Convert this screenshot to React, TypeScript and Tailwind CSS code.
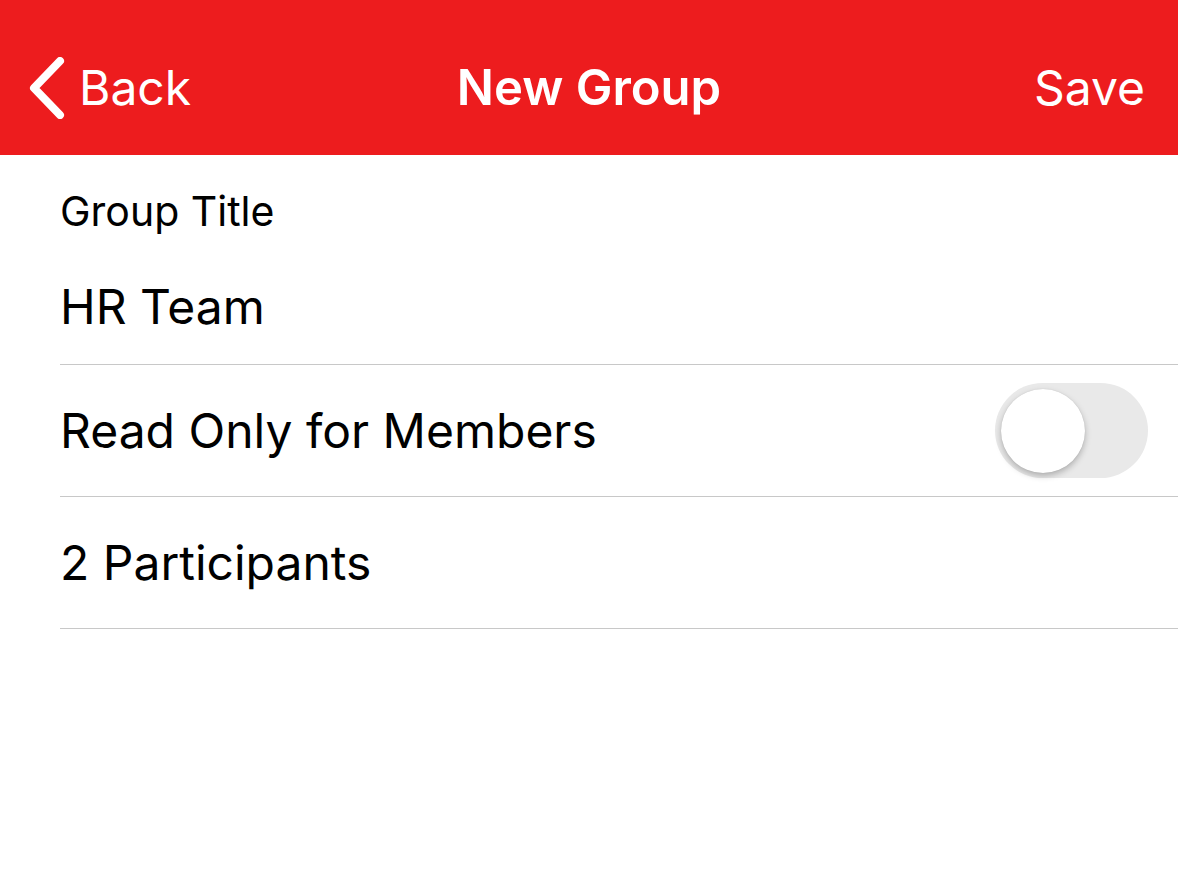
const App = () => {
  return (
    <div className="w-[1178px] h-[870px] bg-white" style={{ fontFamily: "Inter, 'Noto Sans', sans-serif" }}>
      {/* Nav bar */}
      <div className="h-[155px] pt-[20px] bg-[#ed1c1e] flex items-center justify-between text-white relative">
        <div className="flex items-center pl-[29px]">
          <svg width="36" height="62" viewBox="0 0 36 62" fill="none">
            <path d="M31 4 L5 31 L31 58" stroke="white" strokeWidth="8" strokeLinecap="round" strokeLinejoin="round" />
          </svg>
          <span className="ml-[14px] text-[48px] leading-none">Back</span>
        </div>
        <span className="absolute left-1/2 top-[20px] bottom-0 flex items-center -translate-x-1/2 text-[49px] font-semibold leading-none">
          New Group
        </span>
        <span className="pr-[33px] text-[48px] leading-none">Save</span>
      </div>

      <div className="pl-[60px]">
        {/* Group title */}
        <div className="h-[210px] border-b border-[#c8c8c8] flex flex-col">
          <span className="mt-[36px] text-[41px] leading-none text-black">Group Title</span>
          <span className="mt-[51px] text-[48px] leading-none text-black">HR Team</span>
        </div>

        {/* Read only toggle */}
        <div className="h-[132px] border-b border-[#c8c8c8] flex items-center justify-between pr-[30px]">
          <span className="text-[48px] leading-none text-black">Read Only for Members</span>
          <div className="w-[153px] h-[95px] rounded-full bg-[#e9e9e9] flex items-center pl-[6px]">
            <div className="w-[84px] h-[84px] rounded-full bg-white shadow-[0_3px_6px_rgba(0,0,0,0.25),0_0_1px_rgba(0,0,0,0.15)]" />
          </div>
        </div>

        {/* Participants */}
        <div className="h-[132px] border-b border-[#c8c8c8] flex items-center">
          <span className="text-[48px] leading-none text-black">2 Participants</span>
        </div>
      </div>
    </div>
  );
};

export default App;
